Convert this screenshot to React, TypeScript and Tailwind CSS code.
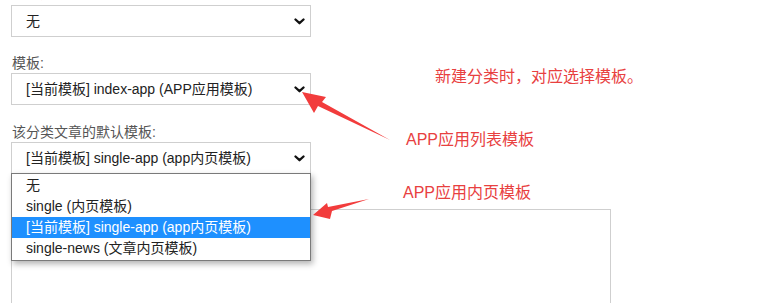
import React from "react";

const font = { fontFamily: '"Liberation Sans", "Noto Sans CJK SC", sans-serif' };

function Chevron() {
  return (
    <svg width="11" height="7" viewBox="0 0 11 7" className="shrink-0">
      <path d="M1.5 1.5 L5.5 5.2 L9.5 1.5" fill="none" stroke="#111" strokeWidth="2.3" strokeLinecap="round" strokeLinejoin="round" />
    </svg>
  );
}

function Select({ value, className = "" }: { value: string; className?: string }) {
  return (
    <div
      className={`h-[32px] w-[300px] border border-[#cfcfcf] bg-white flex items-center justify-between pl-[14px] pr-[5px] text-[14px] text-[#222] ${className}`}
    >
      <span>{value}</span>
      <Chevron />
    </div>
  );
}

function Label({ text, className = "" }: { text: string; className?: string }) {
  return <div className={`h-[18px] leading-[18px] text-[14px] text-[#555] ${className}`}>{text}</div>;
}

export default function App() {
  const options = ["无", "single (内页模板)", "[当前模板] single-app (app内页模板)", "single-news (文章内页模板)"];
  return (
    <div className="relative w-[771px] h-[303px] overflow-hidden bg-white" style={font}>
      <div className="flex flex-col pl-[11px]">
        <Label text="父级分类:" className="mt-[-16px] pl-[1px]" />
        <Select value="无" className="mt-[3px]" />
        <Label text="模板:" className="mt-[17px] pl-[1px]" />
        <Select value="[当前模板] index-app (APP应用模板)" className="mt-[1px]" />
        <Label text="该分类文章的默认模板:" className="mt-[18px] pl-[1px]" />
        <div className="relative mt-[1px] z-10">
          <Select value="[当前模板] single-app (app内页模板)" className="h-[31px]" />
          <div className="absolute left-0 top-[31px] w-[300px] border border-[#7a7a7a] bg-white py-[1px] shadow-[2px_3px_6px_rgba(0,0,0,0.3)]">
            {options.map((o, i) => (
              <div
                key={o}
                className={`h-[21px] leading-[21px] pl-[14px] text-[14px] ${
                  i === 2 ? "bg-[#1e90ff] text-white" : "text-[#222]"
                }`}
              >
                {o}
              </div>
            ))}
          </div>
        </div>
        <div className="mt-[35px] w-[600px] h-[140px] border border-[#cfcfcf] bg-white" />
      </div>

      <div className="absolute left-[435px] top-[67px] text-[16px] leading-[20px] text-[#e8403f]">新建分类时，对应选择模板。</div>
      <div className="absolute left-[406px] top-[130px] text-[16px] leading-[20px] text-[#e8403f]">APP应用列表模板</div>
      <div className="absolute left-[403px] top-[183px] text-[16px] leading-[20px] text-[#e8403f]">APP应用内页模板</div>

      <svg className="absolute left-0 top-0 pointer-events-none z-20" width="771" height="303" viewBox="0 0 771 303">
        <polygon points="302,92 326,97 322,102 390,140 318,106 314,113" fill="#f23c3c" />
        <polygon points="313,215 327,203 328,207 369,199 332,211 330,219" fill="#f23c3c" />
      </svg>
    </div>
  );
}
